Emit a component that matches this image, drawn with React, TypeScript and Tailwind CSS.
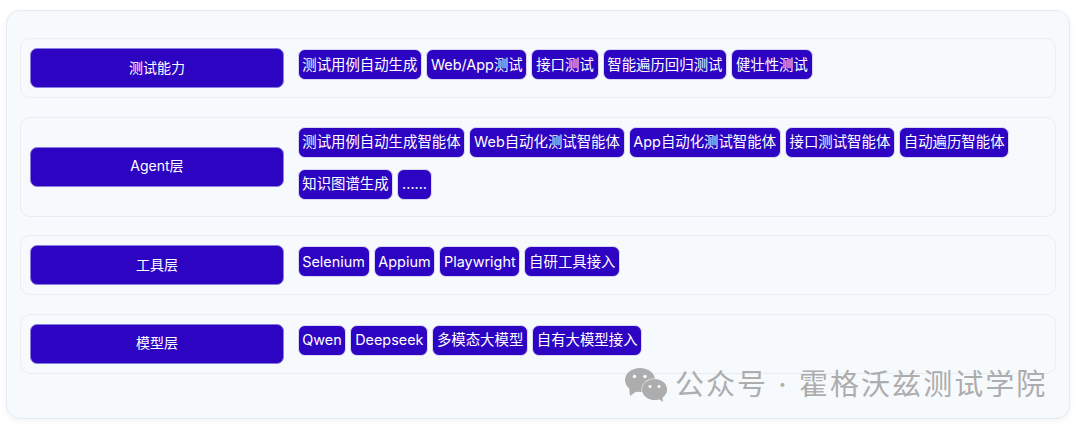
const layers = [
  { name: "测试能力", tags: ["测试用例自动生成", "Web/App测试", "接口测试", "智能遍历回归测试", "健壮性测试"] },
  {
    name: "Agent层",
    tags: ["测试用例自动生成智能体", "Web自动化测试智能体", "App自动化测试智能体", "接口测试智能体", "自动遍历智能体", "知识图谱生成", "......"],
  },
  { name: "工具层", tags: ["Selenium", "Appium", "Playwright", "自研工具接入"] },
  { name: "模型层", tags: ["Qwen", "Deepseek", "多模态大模型", "自有大模型接入"] },
];

function WechatIcon() {
  return (
    <svg viewBox="0 0 42 34" className="h-[34px] w-[42px]">
      <ellipse cx="15" cy="12" rx="15" ry="12" fill="#adadad" />
      <path d="M4 19l1 9 7-5z" fill="#adadad" />
      <ellipse cx="29.500" cy="21.500" rx="13" ry="11" fill="#f7fafd" />
      <ellipse cx="29.500" cy="21.500" rx="12.500" ry="10.500" fill="#adadad" />
      <path d="M32 30l6 4-1-8z" fill="#adadad" />
      <circle cx="9.500" cy="8.500" r="1.800" fill="#f7fafd" />
      <circle cx="20" cy="8.500" r="1.800" fill="#f7fafd" />
      <circle cx="25" cy="18.500" r="1.500" fill="#f7fafd" />
      <circle cx="34" cy="18.500" r="1.500" fill="#f7fafd" />
    </svg>
  );
}

export default function App() {
  return (
    <div
      className="h-[430px] w-[1080px] overflow-hidden bg-white pl-[6px] pt-[10px] antialiased"
      style={{ fontFamily: 'Inter, "Noto Sans CJK SC", sans-serif' }}
    >
      <div className="relative flex h-[409px] w-[1064px] flex-col gap-[18.500px] rounded-[14px] border border-[#e6ebf2] bg-[#f7fafd] px-[13px] pt-[27px] shadow-[0_2px_6px_rgba(0,0,0,0.05)]">
        {layers.map((layer) => (
          <div
            key={layer.name}
            className="flex items-center gap-[13.500px] rounded-[10px] border border-[#e8edf3] bg-[#f7fafd] p-[9px]"
          >
            <div className="flex h-[40px] w-[254px] shrink-0 items-center justify-center rounded-[7px] border border-[#8a7de0] bg-[#2d04c2] pb-[2px] text-[14px] text-white">
              {layer.name}
            </div>
            <div className="flex flex-wrap gap-x-[4px] gap-y-[11px] pb-[7px]">
              {layer.tags.map((tag) => (
                <span
                  key={tag}
                  className="flex h-[31px] items-center rounded-[7px] border border-[#d9d5f5] bg-[#2d04c2] px-[3.750px] text-[14.400px] text-white"
                >
                  {tag}
                </span>
              ))}
            </div>
          </div>
        ))}
        <div className="absolute left-[618px] top-[357px] flex items-center gap-[8px] text-[29px] leading-[34px] tracking-[2.050px] whitespace-nowrap text-[#adadad]">
          <WechatIcon />
          <span>公众号 · 霍格沃兹测试学院</span>
        </div>
      </div>
    </div>
  );
}
